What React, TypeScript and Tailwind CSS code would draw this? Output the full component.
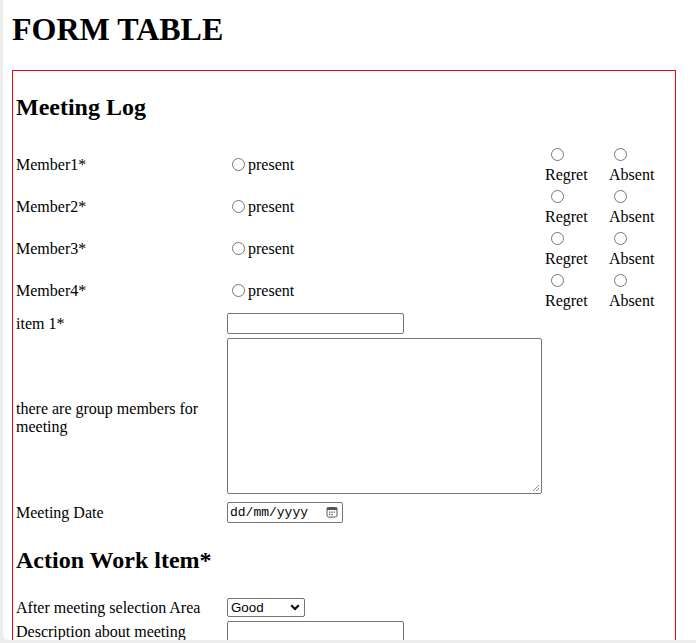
import clsx from 'clsx';

function Radio({ className }: { className?: string }) {
  return (
    <span
      className={clsx(
        'inline-block w-[13px] h-[13px] shrink-0 rounded-full border border-[#767676] bg-white box-border',
        className
      )}
    />
  );
}

function MemberRow({ name }: { name: string }) {
  return (
    <div className="flex h-[40px]">
      <div className="w-[211px] flex items-center leading-[18px] pt-[2px]">{name}</div>
      <div className="w-[319px] flex items-center">
        <Radio className="ml-[5px] mr-[3px]" />
        <span className="leading-[18px] pt-[2px]">present</span>
      </div>
      <div className="w-[63px] flex flex-col pt-[4px]">
        <Radio className="ml-[5px]" />
        <span className="mt-[5px] leading-[18px] -ml-[1px]">Regret</span>
      </div>
      <div className="w-[60px] flex flex-col pt-[4px]">
        <Radio className="ml-[5px]" />
        <span className="mt-[5px] leading-[18px]">Absent</span>
      </div>
    </div>
  );
}

function TextBox({ className }: { className?: string }) {
  return (
    <div
      className={clsx(
        'border border-[#767676] rounded-[2px] bg-white box-border',
        className
      )}
    />
  );
}

export default function App() {
  return (
    <div className="h-[643px] bg-[#ececec] pl-[3px] pb-[3px] flex overflow-hidden">
      <div className="flex-1 bg-white rounded-bl-[6px] overflow-hidden pl-[9px] pt-[11px] text-black font-['Liberation_Serif','Times_New_Roman',serif] text-[16px]">
        {/* Title */}
        <h1 className="text-[32px] font-bold leading-[37px] mb-[22px]">FORM TABLE</h1>

        {/* Form box */}
        <div className="w-[664px] h-[600px] border border-[#ff0000] pl-[3px] pt-[22px]">
          <h2 className="text-[24px] font-bold leading-[28px]">Meeting Log</h2>

          <div className="mt-[23px] flex flex-col gap-[2px]">
            <MemberRow name="Member1*" />
            <MemberRow name="Member2*" />
            <MemberRow name="Member3*" />
            <MemberRow name="Member4*" />

            {/* item 1 */}
            <div className="flex h-[22px] items-center">
              <div className="w-[211px] leading-[18px] pt-[2px]">item 1*</div>
              <TextBox className="w-[177px] h-[21px]" />
            </div>

            {/* textarea */}
            <div className="flex h-[160px] items-center">
              <div className="w-[211px] leading-[18px] pr-[2px] pt-[4px]">there are group members for meeting</div>
              <div className="relative w-[315px] h-[156px] border border-[#767676] rounded-[2px] bg-white box-border">
                <svg className="absolute right-[1px] bottom-[1px]" width="9" height="9" viewBox="0 0 9 9">
                  <line x1="8" y1="2" x2="2" y2="8" stroke="#8a8a8a" strokeWidth="1" />
                  <line x1="8" y1="5" x2="5" y2="8" stroke="#8a8a8a" strokeWidth="1" />
                </svg>
              </div>
            </div>

            {/* date */}
            <div className="flex h-[28px] items-center">
              <div className="w-[211px] leading-[18px] pt-[2px]">Meeting Date</div>
              <div className="w-[116px] h-[21px] border border-[#767676] rounded-[2px] box-border flex items-center pl-[2px] pr-[4px] justify-between">
                <span className="font-['Liberation_Mono',monospace] text-[13px] leading-[15px]">dd/mm/yyyy</span>
                <svg width="12" height="12" viewBox="0 0 12 12">
                  <rect x="1" y="1.5" width="10" height="9.5" rx="1.5" fill="none" stroke="#555" strokeWidth="1" />
                  <rect x="1" y="1.5" width="10" height="2.5" fill="#555" />
                  <rect x="3" y="5.5" width="1.3" height="1.3" fill="#555" />
                  <rect x="5.3" y="5.5" width="1.3" height="1.3" fill="#555" />
                  <rect x="7.6" y="5.5" width="1.3" height="1.3" fill="#555" />
                  <rect x="3" y="7.8" width="1.3" height="1.3" fill="#555" />
                  <rect x="5.3" y="7.8" width="1.3" height="1.3" fill="#555" />
                </svg>
              </div>
            </div>
          </div>

          <h2 className="text-[24px] font-bold leading-[28px] mt-[20px]">Action Work ltem*</h2>

          <div className="mt-[23px] flex flex-col gap-[3px]">
            <div className="flex h-[20px] items-center">
              <div className="w-[211px] leading-[18px] pt-[2px]">After meeting selection Area</div>
              <div className="w-[78px] h-[19px] border border-[#767676] rounded-[2px] box-border flex items-center justify-between pl-[3px] pr-[4px]">
                <span className="font-['Liberation_Sans',Arial,sans-serif] text-[13.33px] leading-[15px]">Good</span>
                <svg width="10" height="7" viewBox="0 0 10 7">
                  <path d="M1.2 1.2 L5 5 L8.8 1.2" fill="none" stroke="#000" strokeWidth="2" />
                </svg>
              </div>
            </div>
            <div className="flex h-[22px] items-start">
              <div className="w-[211px] leading-[18px] pt-[3px]">Description about meeting</div>
              <TextBox className="w-[177px] h-[21px] mt-[1px]" />
            </div>
          </div>
        </div>
      </div>
    </div>
  );
}
